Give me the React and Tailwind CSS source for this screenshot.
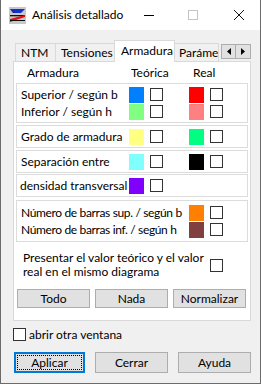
import React, { useState } from "react";

const font = { fontFamily: 'Lato, "Liberation Sans", sans-serif' };

const Swatch = ({ color }) => (
  <span className={`block w-[15px] h-[16px] ${color}`}></span>
);

const Box = ({ checked, onClick }) => (
  <span
    onClick={onClick}
    className="block w-[13px] h-[13px] border border-[#333333] bg-white"
  >
    {checked && (
      <svg viewBox="0 0 11 11" className="w-[11px] h-[11px]">
        <path d="M2 5.5l2.5 2.5 4.5-5" stroke="#333" strokeWidth="1.4" fill="none" />
      </svg>
    )}
  </span>
);

const Row = ({ label, teo, real, labelW = "w-[112px]", tight = false }) => (
  <div className="flex items-center h-[17px]">
    <span className={`${labelW} pl-[4px] whitespace-nowrap ${tight ? "tracking-[-0.35px]" : ""}`}>{label}</span>
    {teo ? (
      <div className="flex items-center w-[60px]">
        <Swatch color={teo} />
        <span className="ml-[6px]"><Box /></span>
      </div>
    ) : null}
    {real ? (
      <div className="flex items-center">
        <Swatch color={real} />
        <span className="ml-[6px]"><Box /></span>
      </div>
    ) : null}
  </div>
);

const Group = ({ children, className = "" }) => (
  <div className={`mx-[2px] border border-[#dcdcdc] ${className}`}>{children}</div>
);

const Btn = ({ children, className = "" }) => (
  <button
    className={`h-[19px] border border-[#adadad] bg-[#e1e1e1] text-[12px] leading-none text-black whitespace-nowrap ${className}`}
  >
    {children}
  </button>
);

const AppIcon = () => (
  <svg viewBox="0 0 17 17" className="w-[17px] h-[17px]">
    <rect x="0" y="0" width="17" height="17" fill="#c8c8c8" />
    <path d="M1 2h15l-4 4H5z" fill="#1030d0" />
    <path d="M1 2l3 4h2z" fill="#0a1a80" />
    <rect x="1" y="8" width="15" height="1.3" fill="#111" />
    <path d="M1 15l0-3 15-4 0 2-9 3z" fill="#e01010" />
    <rect x="1" y="13" width="15" height="1" fill="#111" />
  </svg>
);

export default function App() {
  const [tab] = useState("Armadura");
  return (
    <div style={font} className="w-[262px] h-[386px] bg-white text-[12px] text-black">
      <div className="w-[261px] h-[384px] border-l border-r border-b border-[#6b6b6b] bg-[#f0f0f0] flex flex-col">
        {/* title bar */}
        <div className="h-[30px] bg-white flex items-center">
          <span className="ml-[8px]"><AppIcon /></span>
          <span className="ml-[6px] w-[112px] text-[12px] whitespace-nowrap">Análisis detallado</span>
          <span className="w-[10px] h-px bg-black"></span>
          <span className="ml-[34px] w-[10px] h-[10px] border border-[#c4c4c4]"></span>
          <svg viewBox="0 0 10 10" className="ml-[36px] w-[10px] h-[10px]">
            <path d="M0 0L10 10M10 0L0 10" stroke="#111" strokeWidth="1" />
          </svg>
        </div>

        {/* tabs */}
        <div className="mt-[10px] ml-[12px] flex items-end h-[21px] relative">
          <div className="flex items-end">
            <div className="h-[18px] w-[41px] ml-[2px] border border-b-0 border-[#d9d9d9] bg-[#f0f0f0] pl-[5px] leading-[17px] whitespace-nowrap">NTM</div>
            <div className="h-[18px] w-[59px] border border-l-0 border-b-0 border-[#d9d9d9] bg-[#f0f0f0] pl-[5px] leading-[17px] whitespace-nowrap">Tensiones</div>
            <div className="h-[22px] w-[61px] -ml-[1px] border border-b-0 border-[#d9d9d9] bg-white pl-[6px] leading-[19px] relative z-10 -mb-px whitespace-nowrap">
              {tab}
            </div>
            <div className="h-[18px] w-[44px] border border-l-0 border-b-0 border-[#d9d9d9] bg-[#f0f0f0] pl-[4px] leading-[17px] overflow-hidden whitespace-nowrap">Parámetros</div>
          </div>
          <div className="absolute left-[208px] top-[4px] flex">
            <span className="w-[15px] h-[15px] border border-[#adadad] bg-[#e1e1e1] flex items-center justify-center">
              <svg viewBox="0 0 4 7" className="w-[4px] h-[7px]"><path d="M4 0v7L0 3.5z" fill="#000" /></svg>
            </span>
            <span className="w-[15px] h-[15px] border border-l-0 border-[#adadad] bg-[#e1e1e1] flex items-center justify-center">
              <svg viewBox="0 0 4 7" className="w-[4px] h-[7px]"><path d="M0 0v7L4 3.5z" fill="#000" /></svg>
            </span>
          </div>
        </div>

        {/* panel */}
        <div className="ml-[12px] w-[238px] h-[260px] border border-[#d9d9d9] bg-white flex flex-col">
          <div className="flex h-[21px] items-center">
            <span className="pl-[13px] w-[117px]">Armadura</span>
            <span className="w-[62px]">Teórica</span>
            <span>Real</span>
          </div>
          <Group className="py-[2px]">
            <Row label="Superior / según b" teo="bg-[#0080ff]" real="bg-[#ff0000]" />
            <Row label="Inferior / según h" teo="bg-[#80ff80]" real="bg-[#ff8080]" />
          </Group>
          <Group className="mt-[2px] py-[2px]">
            <Row label="Grado de armadura" teo="bg-[#ffff80]" real="bg-[#00ff80]" />
          </Group>
          <Group className="mt-[2px] py-[2px]">
            <Row label="Separación entre" teo="bg-[#80ffff]" real="bg-[#000000]" />
          </Group>
          <Group className="mt-[1px] py-[2px]">
            <div className="flex items-center h-[17px]">
              <span className="w-[112px] pl-[3px] whitespace-nowrap">densidad transversal</span>
              <Swatch color="bg-[#8000ff]" />
              <span className="ml-[6px]"><Box /></span>
            </div>
          </Group>
          <Group className="mt-[3px] py-[3px]">
            <Row label="Número de barras sup. / según b" real="bg-[#ff8000]" labelW="w-[172px]" tight />
            <Row label="Número de barras inf. / según h" real="bg-[#804040]" labelW="w-[172px]" tight />
          </Group>
          <div className="flex items-center mt-[9px] h-[28px]">
            <span className="pl-[9px] w-[196px] leading-[14px] whitespace-nowrap">
              Presentar el valor teórico y el valor<br />real en el mismo diagrama
            </span>
            <Box />
          </div>
          <div className="flex mt-[10px] pl-[3px] gap-[5px]">
            <Btn className="w-[73px]">Todo</Btn>
            <Btn className="w-[73px]">Nada</Btn>
            <Btn className="w-[73px]">Normalizar</Btn>
          </div>
        </div>

        <div className="flex items-center mt-[7px] ml-[12px] h-[13px]">
          <span className="w-[13px] h-[13px] border border-[#333333] bg-white"></span>
          <span className="ml-[3px] whitespace-nowrap">abrir otra ventana</span>
        </div>

        <div className="flex mt-[11px] ml-[13px] gap-[10px]">
          <button className="w-[71px] h-[21px] border-2 border-[#0078d7] bg-[#e1e1e1] p-px text-[12px] leading-none">
            <span className="flex items-center justify-center w-full h-full border border-dotted border-black">Aplicar</span>
          </button>
          <Btn className="w-[73px] h-[21px]">Cerrar</Btn>
          <Btn className="w-[73px] h-[21px]">Ayuda</Btn>
        </div>
      </div>
    </div>
  );
}
